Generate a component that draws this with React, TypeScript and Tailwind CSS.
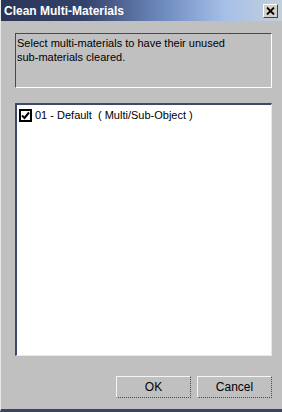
import React from "react";

export default function App() {
  const font = { fontFamily: '"Liberation Sans", Arial, sans-serif' };
  const btn =
    "w-[75px] h-[22px] bg-[#c0c0c0] border-t border-l border-t-[#f4f4f4] border-l-[#f4f4f4] border-b border-r border-b-[#3b4a6b] border-r-[#3b4a6b] [border-bottom-style:dotted] [border-right-style:dotted] text-[12px] text-black leading-none";
  return (
    <div
      className="w-[282px] h-[412px] bg-[#c0c0c0] flex flex-col border-l border-l-[#e8e8e8] border-b-[3px] border-b-[#3a4560] overflow-hidden"
      style={font}
    >
      {/* Title bar */}
      <div className="h-[21px] shrink-0 flex items-center pl-[3px] pr-[2px] bg-[linear-gradient(to_right,#2a3557_0%,#34436c_30%,#6f8cc0_58%,#a6c0e8_80%,#c4cfdc_100%)]">
        <span className="text-white font-bold text-[12px] leading-none flex-1">
          Clean Multi-Materials
        </span>
        <div className="w-[15px] h-[14px] bg-[#d4d0c8] border-t border-l border-t-white border-l-white border-r border-b border-r-[#404040] border-b-[#404040] flex items-center justify-center mr-[2px] mt-[1px]">
          <svg width="9" height="8" viewBox="0 0 9 8">
            <path d="M1 0.5 L8 7.5 M8 0.5 L1 7.5" stroke="#000" strokeWidth="1.8" />
          </svg>
        </div>
      </div>

      <div className="flex flex-col pl-[14px] pr-[10px] flex-1">
        {/* Description box */}
        <div className="mt-[12px] h-[55px] border-t border-l border-t-[#3b4a6b] border-l-[#3b4a6b] border-b border-r border-b-white border-r-white px-[1px] pt-[2px]">
          <p className="text-[11px] leading-[14px] text-black">
            Select multi-materials to have their unused
            <br />
            sub-materials cleared.
          </p>
        </div>

        {/* List box */}
        <div className="mt-[15px] h-[253px] bg-white border-t-2 border-l-2 border-t-[#3b4a6b] border-l-[#3b4a6b] border-b border-r border-b-[#e8e8e8] border-r-[#e8e8e8] pt-[3px] pl-[2px]">
          <div className="flex items-center gap-[3px] h-[14px]">
            <div className="w-[13px] h-[13px] border-2 border-black bg-white flex items-center justify-center">
              <svg width="9" height="9" viewBox="0 0 9 9">
                <path d="M1 4.5 L3.5 7 L8 1.5" stroke="#000" strokeWidth="2" fill="none" />
              </svg>
            </div>
            <span className="text-[11px] leading-none text-black whitespace-pre">
              01 - Default  ( Multi/Sub-Object )
            </span>
          </div>
        </div>

        {/* Buttons */}
        <div className="mt-[20px] flex justify-end gap-[6px]">
          <button className={btn}>OK</button>
          <button className={btn}>Cancel</button>
        </div>
      </div>
    </div>
  );
}
